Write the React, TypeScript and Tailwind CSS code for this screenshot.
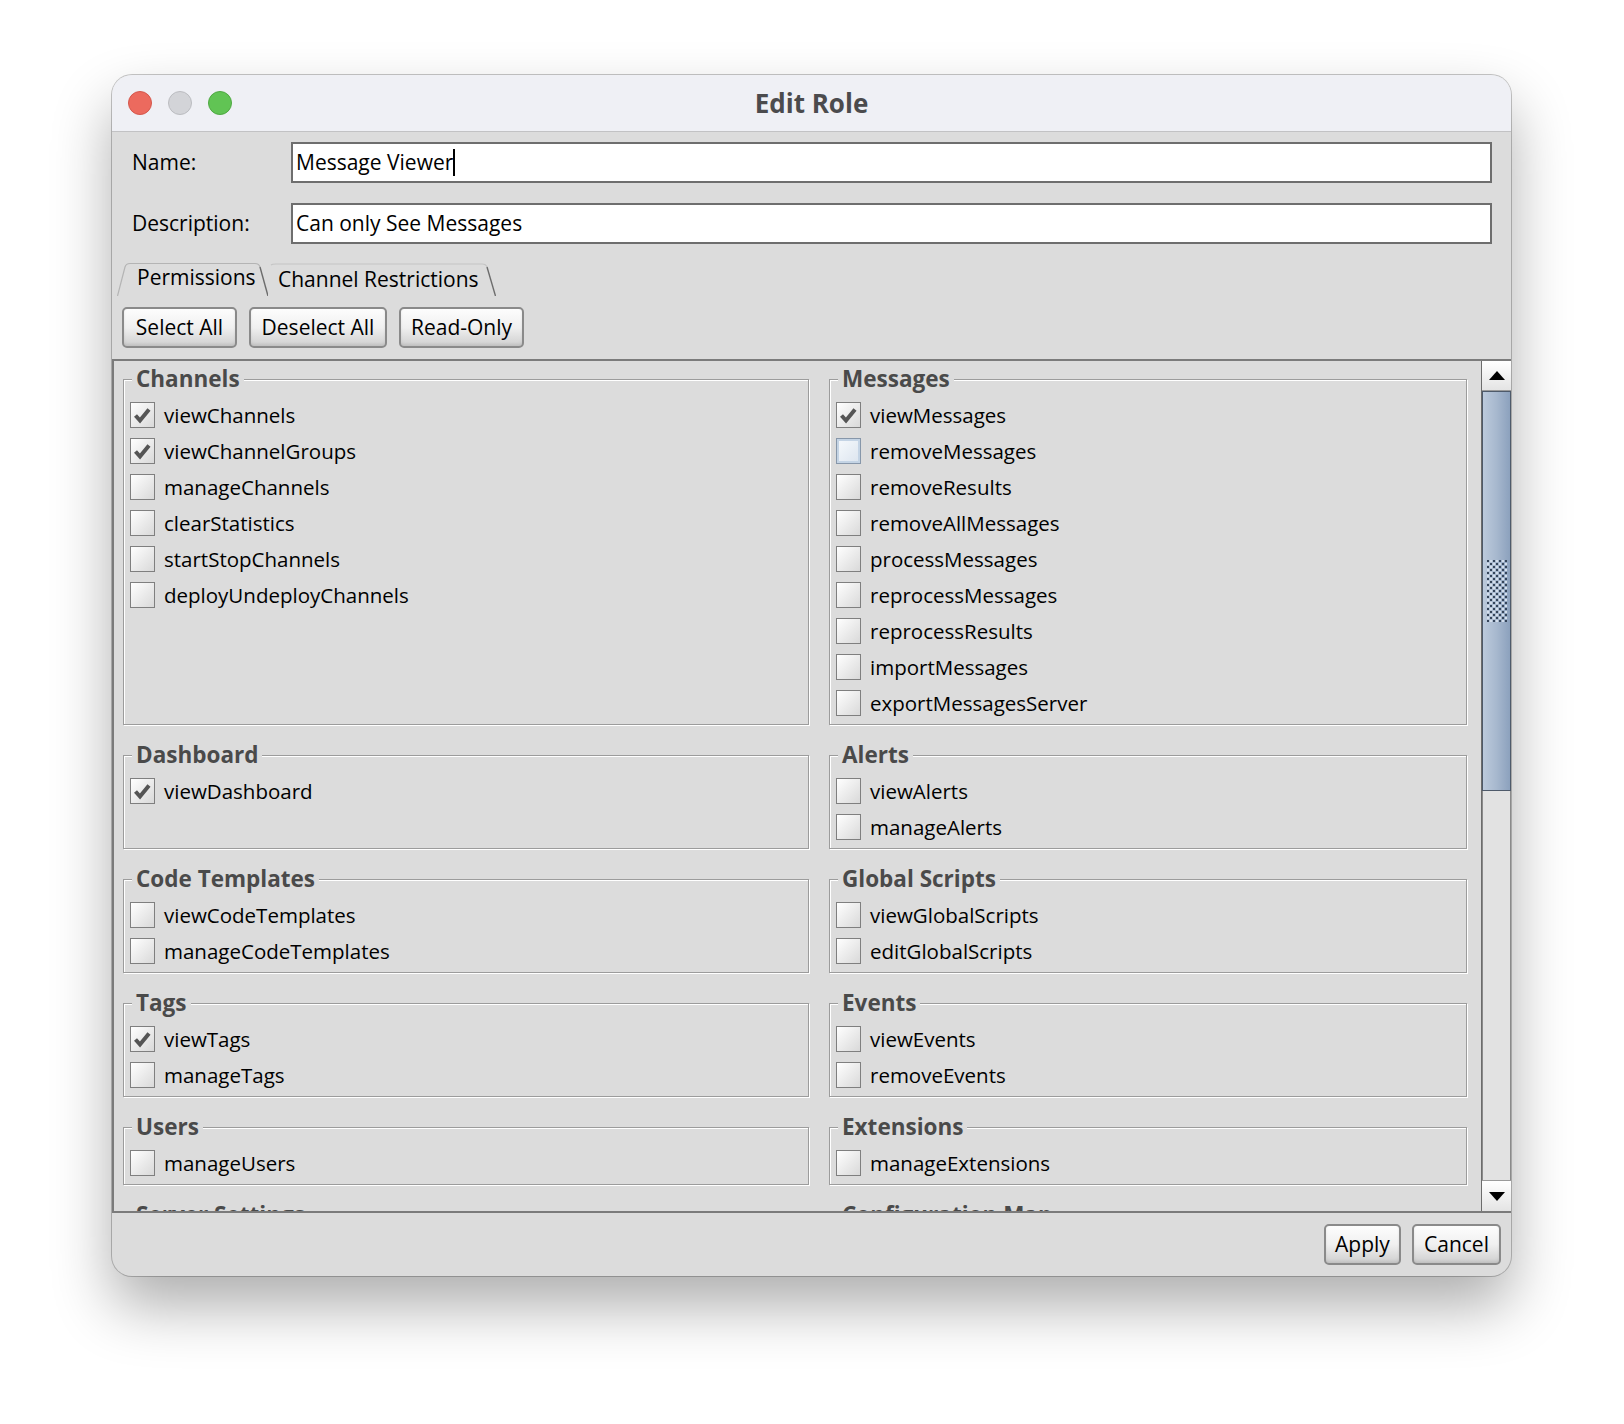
import React from 'react';

type Perm = [string, boolean, boolean?];
type Group = { title: string; items: Perm[] };

const groups: Group[] = [
  {
    title: 'Channels',
    items: [
      ['viewChannels', true],
      ['viewChannelGroups', true],
      ['manageChannels', false],
      ['clearStatistics', false],
      ['startStopChannels', false],
      ['deployUndeployChannels', false],
    ],
  },
  {
    title: 'Messages',
    items: [
      ['viewMessages', true],
      ['removeMessages', false, true],
      ['removeResults', false],
      ['removeAllMessages', false],
      ['processMessages', false],
      ['reprocessMessages', false],
      ['reprocessResults', false],
      ['importMessages', false],
      ['exportMessagesServer', false],
    ],
  },
  { title: 'Dashboard', items: [['viewDashboard', true]] },
  { title: 'Alerts', items: [['viewAlerts', false], ['manageAlerts', false]] },
  { title: 'Code Templates', items: [['viewCodeTemplates', false], ['manageCodeTemplates', false]] },
  { title: 'Global Scripts', items: [['viewGlobalScripts', false], ['editGlobalScripts', false]] },
  { title: 'Tags', items: [['viewTags', true], ['manageTags', false]] },
  { title: 'Events', items: [['viewEvents', false], ['removeEvents', false]] },
  { title: 'Users', items: [['manageUsers', false]] },
  { title: 'Extensions', items: [['manageExtensions', false]] },
  { title: 'Server Settings', items: [['viewServerSettings', false], ['editServerSettings', false]] },
  { title: 'Configuration Map', items: [['viewConfigurationMap', false], ['editConfigurationMap', false]] },
];

const CheckBox: React.FC<{ checked: boolean; focus?: boolean }> = ({ checked, focus }) => (
  <span
    className={
      focus
        ? 'flex w-[25px] h-[26px] shrink-0 border border-[#8797aa] bg-gradient-to-br from-[#f7fafd] to-[#dbe4ee] shadow-[inset_0_0_0_2px_#c4d4e5]'
        : 'flex w-[25px] h-[26px] shrink-0 border border-[#7f7f7f] bg-gradient-to-br from-white to-[#d9d9d9]'
    }
  >
    {checked && (
      <svg width="23" height="24" viewBox="0 0 23 24">
        <path d="M4.5 12.5 L9 17.5 L18 6.5" fill="none" stroke="#555555" strokeWidth="4" />
      </svg>
    )}
  </span>
);

// etched titled border, like a Swing TitledBorder
const GroupBox: React.FC<{ group: Group }> = ({ group }) => (
  <fieldset className="border border-[#9c9c9c] shadow-[inset_1px_1px_0_#ffffff,1px_1px_0_#ffffff] px-[6px] pt-[5px] pb-[3px] min-w-0">
    <legend className="ml-[2px] px-[4px] bg-[#dcdcdc] text-[22.5px] leading-[26px] font-bold text-[#4a4a4a]">
      {group.title}
    </legend>
    {group.items.map(([name, checked, focus]) => (
      <div key={name} className="flex items-center h-[36px] gap-[9px]">
        <CheckBox checked={checked} focus={focus} />
        <span className="text-[20.5px] leading-[26px] text-black">{name}</span>
      </div>
    ))}
  </fieldset>
);

const Button: React.FC<{ label: string; w: string }> = ({ label, w }) => (
  <button
    className={`${w} h-[41px] border-2 border-[#8a8a8a] rounded-[5px] bg-gradient-to-b from-[#fdfdfd] via-[#f0f0f0] to-[#cfcfcf] shadow-[inset_0_-2px_3px_rgba(0,0,0,0.08)] text-[21px] text-black flex items-center justify-center`}
  >
    {label}
  </button>
);

const Arrow: React.FC<{ up?: boolean }> = ({ up }) => (
  <svg width="16" height="9" viewBox="0 0 16 9">
    <path d={up ? 'M8 0 L16 9 L0 9 Z' : 'M0 0 L16 0 L8 9 Z'} fill="#000" />
  </svg>
);

const ScrollBar: React.FC = () => (
  <div className="w-[30px] flex flex-col border-l border-[#6c6c6c] bg-[#dcdcdc]">
    <div className="h-[30px] flex items-center justify-center bg-gradient-to-b from-white to-[#e4e4e4] border-b border-[#9a9a9a]">
      <Arrow up />
    </div>
    <div className="h-[400px] border border-[#4e5a6a] bg-gradient-to-r from-[#bccadc] via-[#a7b8ce] to-[#8ca1bd] flex items-end justify-center pb-[168px]">
      <svg width="20" height="62" viewBox="0 0 20 62">
        <defs>
          <pattern id="grip" width="6" height="6" patternUnits="userSpaceOnUse">
            <rect x="0" y="0" width="2" height="2" fill="#36455a" />
            <rect x="3" y="3" width="2" height="2" fill="#36455a" />
            <rect x="3" y="0" width="2" height="2" fill="#d5dfec" />
            <rect x="0" y="3" width="2" height="2" fill="#d5dfec" />
          </pattern>
        </defs>
        <rect width="20" height="62" fill="url(#grip)" />
      </svg>
    </div>
    <div className="flex-1 border-x border-[#8a8a8a] bg-[#e2e2e2]" />
    <div className="h-[31px] flex items-center justify-center bg-gradient-to-b from-white to-[#e4e4e4] border-t border-[#9a9a9a]">
      <Arrow />
    </div>
  </div>
);

const App: React.FC = () => {
  return (
    <div className="w-[1624px] h-[1424px] bg-white pt-[75px] pl-[112px] font-['Open_Sans',sans-serif]">
      <div className="w-[1399px] h-[1201px] rounded-[20px] overflow-hidden bg-[#dcdcdc] flex flex-col shadow-[0_0_0_1px_rgba(0,0,0,0.22),0_30px_60px_rgba(0,0,0,0.32)]">
        {/* Title bar */}
        <div className="h-[57px] shrink-0 bg-[#eff0f5] border-b border-[#c2c2c4] grid grid-cols-[1fr_auto_1fr] items-center">
          <div className="flex items-center gap-[16px] pl-[16px]">
            <span className="w-[24px] h-[24px] rounded-full bg-[#ec6a5e] border border-[#d4574c]" />
            <span className="w-[24px] h-[24px] rounded-full bg-[#d3d4d8] border border-[#bbbcc0]" />
            <span className="w-[24px] h-[24px] rounded-full bg-[#61c454] border border-[#4fa842]" />
          </div>
          <div className="text-[26px] font-bold text-[#4b4b4d]">Edit Role</div>
          <div />
        </div>

        {/* Name / Description */}
        <div className="flex flex-col gap-[20px] pt-[10px] pl-[20px] pr-[19px]">
          <div className="flex items-center">
            <span className="w-[159px] text-[21px] text-black">Name:</span>
            <div className="flex-1 h-[41px] bg-white border-2 border-[#6e6e6e] flex items-center pl-[3px] text-[21px] text-black">
              <span>Message Viewer</span>
              <span className="w-[2px] h-[27px] bg-black" />
            </div>
          </div>
          <div className="flex items-center">
            <span className="w-[159px] text-[21px] text-black">Description:</span>
            <div className="flex-1 h-[41px] bg-white border-2 border-[#6e6e6e] flex items-center pl-[3px] text-[21px] text-black">
              Can only See Messages
            </div>
          </div>
        </div>

        {/* Tabs */}
        <div className="flex pl-[5px] mt-[18px] h-[34px]">
          <div className="relative w-[151px] h-[34px] flex items-center pl-[20px] pb-[3px] text-[21px] text-black">
            <svg className="absolute inset-0" width="151" height="34" viewBox="0 0 151 34">
              <path d="M0.5 34 L8 5 Q9 1.5 13 1.5 L138 1.5 Q142 1.5 143 5" fill="none" stroke="#b4b4b4" strokeWidth="1.2" />
              <path d="M143 5 L151 34" fill="none" stroke="#6c6c6c" strokeWidth="1.4" />
            </svg>
            <span className="relative">Permissions</span>
          </div>
          <div className="relative w-[228px] h-[34px] flex items-center pl-[10px] pt-[2px] text-[21px] text-black">
            <svg className="absolute inset-0" width="228" height="34" viewBox="0 0 228 34">
              <path d="M3 3 Q4 2 8 2 L214 2 Q218 2 219 5" fill="none" stroke="#c4c4c4" strokeWidth="1.2" />
              <path d="M219 5 L227.5 34" fill="none" stroke="#6c6c6c" strokeWidth="1.4" />
            </svg>
            <span className="relative">Channel Restrictions</span>
          </div>
        </div>

        {/* Toolbar buttons */}
        <div className="flex items-center gap-[12px] pl-[10px] mt-[11px]">
          <Button label="Select All" w="w-[115px]" />
          <Button label="Deselect All" w="w-[138px]" />
          <Button label="Read-Only" w="w-[125px]" />
        </div>

        {/* Scroll pane */}
        <div className="mt-[11px] flex-1 min-h-0 flex border-y-2 border-l-2 border-[#7b7b7b]">
          <div className="flex-1 min-w-0 overflow-hidden pl-[9px] pt-[5px]">
            <div className="grid grid-cols-[686px_638px] gap-x-[20px] gap-y-[17px]">
              {groups.map((g) => (
                <GroupBox key={g.title} group={g} />
              ))}
            </div>
          </div>
          <ScrollBar />
        </div>

        {/* Footer */}
        <div className="h-[63px] shrink-0 flex justify-end items-start gap-[11px] pt-[11px] pr-[10px]">
          <Button label="Apply" w="w-[77px]" />
          <Button label="Cancel" w="w-[89px]" />
        </div>
      </div>
    </div>
  );
};

export default App;
